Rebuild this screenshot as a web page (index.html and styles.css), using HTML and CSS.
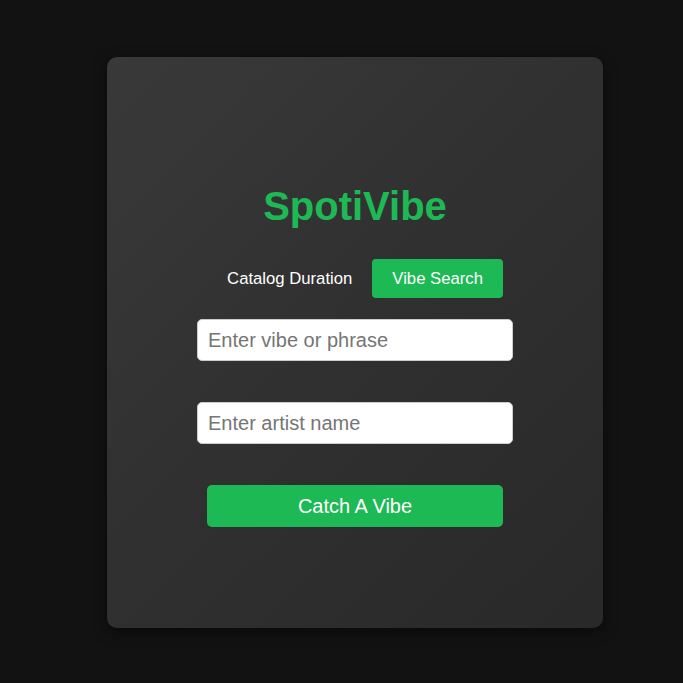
FILE: index.html
```html
<!DOCTYPE html>
<html>
<head>
<meta charset="utf-8">
<link rel="stylesheet" href="styles.css">
</head>
<body>
<div class="card">
  <h1 class="title">SpotiVibe</h1>
  <div class="tabs">
    <button class="tab">Catalog Duration</button>
    <button class="tab active">Vibe Search</button>
  </div>
  <input class="field" type="text" placeholder="Enter vibe or phrase">
  <input class="field" type="text" placeholder="Enter artist name">
  <button class="go">Catch A Vibe</button>
</div>
</body>
</html>
```
FILE: styles.css
```css
html, body {
  margin: 0;
  padding: 0;
  background: #121212;
  font-family: "Liberation Sans", Arial, sans-serif;
}
body {
  width: 683px;
  height: 683px;
  overflow: hidden;
}
.card {
  box-sizing: border-box;
  margin: 57px 0 0 107px;
  width: 496px;
  height: 571px;
  border-radius: 10px;
  background: linear-gradient(135deg, #393939 0%, #2f2f2f 55%, #292929 100%);
  box-shadow: 0 4px 14px rgba(0, 0, 0, 0.5);
  display: flex;
  flex-direction: column;
  align-items: center;
  padding-top: 126px;
}
.title {
  margin: 0;
  font-size: 40px;
  font-weight: bold;
  line-height: 46px;
  color: #1db954;
}
.tabs {
  display: flex;
  margin-top: 30px;
}
.tab {
  font-family: inherit;
  font-size: 16.7px;
  height: 39px;
  padding: 0 20px;
  border: none;
  border-radius: 4px;
  background: transparent;
  color: #ffffff;
}
.tab.active {
  background: #1db954;
}
.field {
  box-sizing: border-box;
  width: 316px;
  height: 42px;
  margin-top: 21px;
  padding: 0 10px;
  font-family: inherit;
  font-size: 20px;
  border: 1px solid #cccccc;
  border-radius: 5px;
  background: #ffffff;
  color: #222;
}
.field + .field {
  margin-top: 41px;
}
.field::placeholder {
  color: #757575;
}
.go {
  box-sizing: border-box;
  width: 296px;
  height: 42px;
  margin-top: 41px;
  font-family: inherit;
  font-size: 20px;
  border: none;
  border-radius: 5px;
  background: #1db954;
  color: #ffffff;
}
```
